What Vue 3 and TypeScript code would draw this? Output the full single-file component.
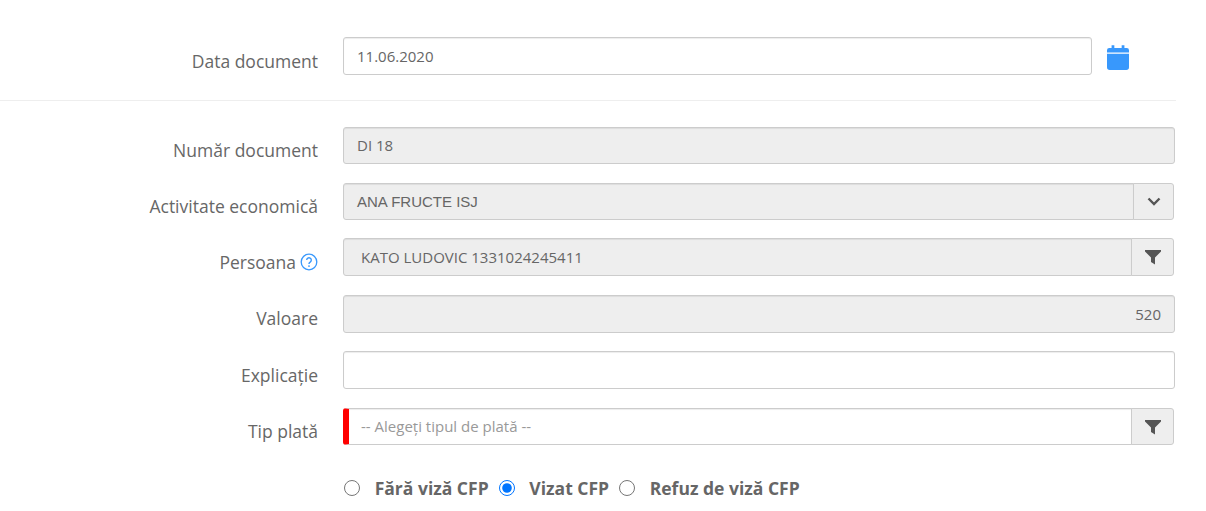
<script setup lang="ts">
import { ref } from 'vue'
const viza = ref('vizat')
const options = [
  { value: 'fara', label: 'Fără viză CFP' },
  { value: 'vizat', label: 'Vizat CFP' },
  { value: 'refuz', label: 'Refuz de viză CFP' },
]
</script>

<template>
  <form class="page" @submit.prevent>
    <div class="row date-row">
      <label class="label">Data document</label>
      <div class="date-field">
        <div class="control date-input">11.06.2020</div>
        <svg class="calendar" width="22" height="25" viewBox="0 0 24 27" aria-hidden="true">
          <path fill="#3898fc" d="M5 0h3v3h8V0h3v3h2.500A2.500 2.500 0 0 1 24 5.500V8H0V5.500A2.500 2.500 0 0 1 2.500 3H5zM0 9.500h24V24a3 3 0 0 1-3 3H3a3 3 0 0 1-3-3z" />
        </svg>
      </div>
    </div>
    <hr class="divider" />

    <div class="row r1">
      <label class="label raised">Număr document</label>
      <div class="control disabled short">DI 18</div>
    </div>
    <div class="row r2">
      <label class="label raised">Activitate economică</label>
      <div class="group narrow">
        <div class="control disabled arial grow short">ANA FRUCTE ISJ</div>
        <div class="addon a41 addon-short">
          <svg width="14" height="9" viewBox="0 0 14 9" aria-hidden="true">
            <path d="M1.500 1.500 7 7l5.500-5.500" fill="none" stroke="#555" stroke-width="2.400" />
          </svg>
        </div>
      </div>
    </div>
    <div class="row r3">
      <label class="label">
        Persoana
        <svg class="help" width="18" height="18" viewBox="0 0 18 18" aria-hidden="true">
          <circle cx="9" cy="9" r="7.800" fill="none" stroke="#3898fc" stroke-width="1.300" />
          <path d="M6.700 7.100A2.300 2.300 0 1 1 10.200 9.100C9.400 9.600 9 10 9 11" fill="none" stroke="#3898fc" stroke-width="1.400" />
          <circle cx="9" cy="13.100" r="0.900" fill="#3898fc" />
        </svg>
      </label>
      <div class="group narrow">
        <div class="control disabled grow inset">KATO LUDOVIC 1331024245411</div>
        <div class="addon a43">
          <svg width="16" height="16" viewBox="0 0 16 16" aria-hidden="true">
            <path d="M0 1h16v1.500L10 8.500V15.500L6 13V8.500L0 2.500z" fill="#555" />
          </svg>
        </div>
      </div>
    </div>
    <div class="row r4">
      <label class="label raised">Valoare</label>
      <div class="control disabled right">520</div>
    </div>
    <div class="row r5">
      <label class="label">Explicație</label>
      <div class="control"></div>
    </div>
    <div class="row r6">
      <label class="label raised">Tip plată</label>
      <div class="group narrow">
        <div class="control required grow short">-- Alegeți tipul de plată --</div>
        <div class="addon a43 addon-short">
          <svg width="16" height="16" viewBox="0 0 16 16" aria-hidden="true">
            <path d="M0 1h16v1.500L10 8.500V15.500L6 13V8.500L0 2.500z" fill="#555" />
          </svg>
        </div>
      </div>
    </div>

    <div class="radios">
      <label v-for="o in options" :key="o.value" class="radio">
        <input v-model="viza" type="radio" name="viza" :value="o.value" />
        <span>{{ o.label }}</span>
      </label>
    </div>
  </form>
</template>

<style>
html, body { margin: 0; background: #fff; }
</style>

<style scoped>
.page {
  width: 1206px;
  height: 511px;
  box-sizing: border-box;
  padding-top: 37px;
  overflow: hidden;
  font-family: "Open Sans", sans-serif;
  color: #666;
}
.row {
  display: grid;
  grid-template-columns: 318px 832px;
  column-gap: 25px;
  align-items: center;
}
.label {
  text-align: right;
  font-size: 17.5px;
  line-height: 24px;
  color: #676767;
  padding-top: 10px;
  display: flex;
  justify-content: flex-end;
  align-items: center;
}
.raised { padding-top: 8px; }
.date-field { display: flex; align-items: flex-start; }
.date-input { width: 749px; flex: none; }
.calendar { margin: 8px 0 0 15px; flex: none; }
.control {
  box-sizing: border-box;
  height: 38px;
  padding: 0 13px;
  border: 1px solid #ccc;
  border-radius: 3px;
  background: #fff;
  box-shadow: inset 0 1px 1px rgba(0, 0, 0, .075);
  font-size: 15px;
  line-height: 37px;
  color: #666;
  white-space: nowrap;
}
.short { height: 37px; line-height: 35px; }
.disabled { background: #eee; }
.arial { font-family: "Liberation Sans", sans-serif; }
.right { text-align: right; }
.inset { padding-left: 17px; }
.grow { flex: 1; border-radius: 3px 0 0 3px; }
.group { display: flex; }
.narrow { width: 831px; }
.addon {
  box-sizing: border-box;
  flex: none;
  height: 38px;
  margin-left: -1px;
  display: flex;
  align-items: center;
  justify-content: center;
  background: #eee;
  border: 1px solid #ccc;
  border-radius: 0 3px 3px 0;
}
.addon-short { height: 37px; }
.a41 { width: 41px; }
.a43 { width: 43px; }
.required {
  padding-left: 12px;
  border-left: 6px solid #f00;
  color: #999;
}
.divider {
  width: 1176px;
  margin: 25px 0 0;
  border: 0;
  border-top: 1px solid #eee;
}
.r1 { margin-top: 26px; }
.r2 { margin-top: 19px; }
.r3 { margin-top: 18px; }
.r4 { margin-top: 19px; }
.r5 { margin-top: 18px; }
.r6 { margin-top: 19px; }
.help { margin-left: 4px; }
.radios {
  display: flex;
  margin: 31px 0 0 344px;
  gap: 10px;
  font-size: 17.5px;
  font-weight: 700;
  line-height: 24px;
  color: #666;
}
.radio { display: flex; align-items: center; }
.radio input { width: 16px; height: 16px; margin: 0 14.7px 0 0; accent-color: #0075ff; }
</style>
